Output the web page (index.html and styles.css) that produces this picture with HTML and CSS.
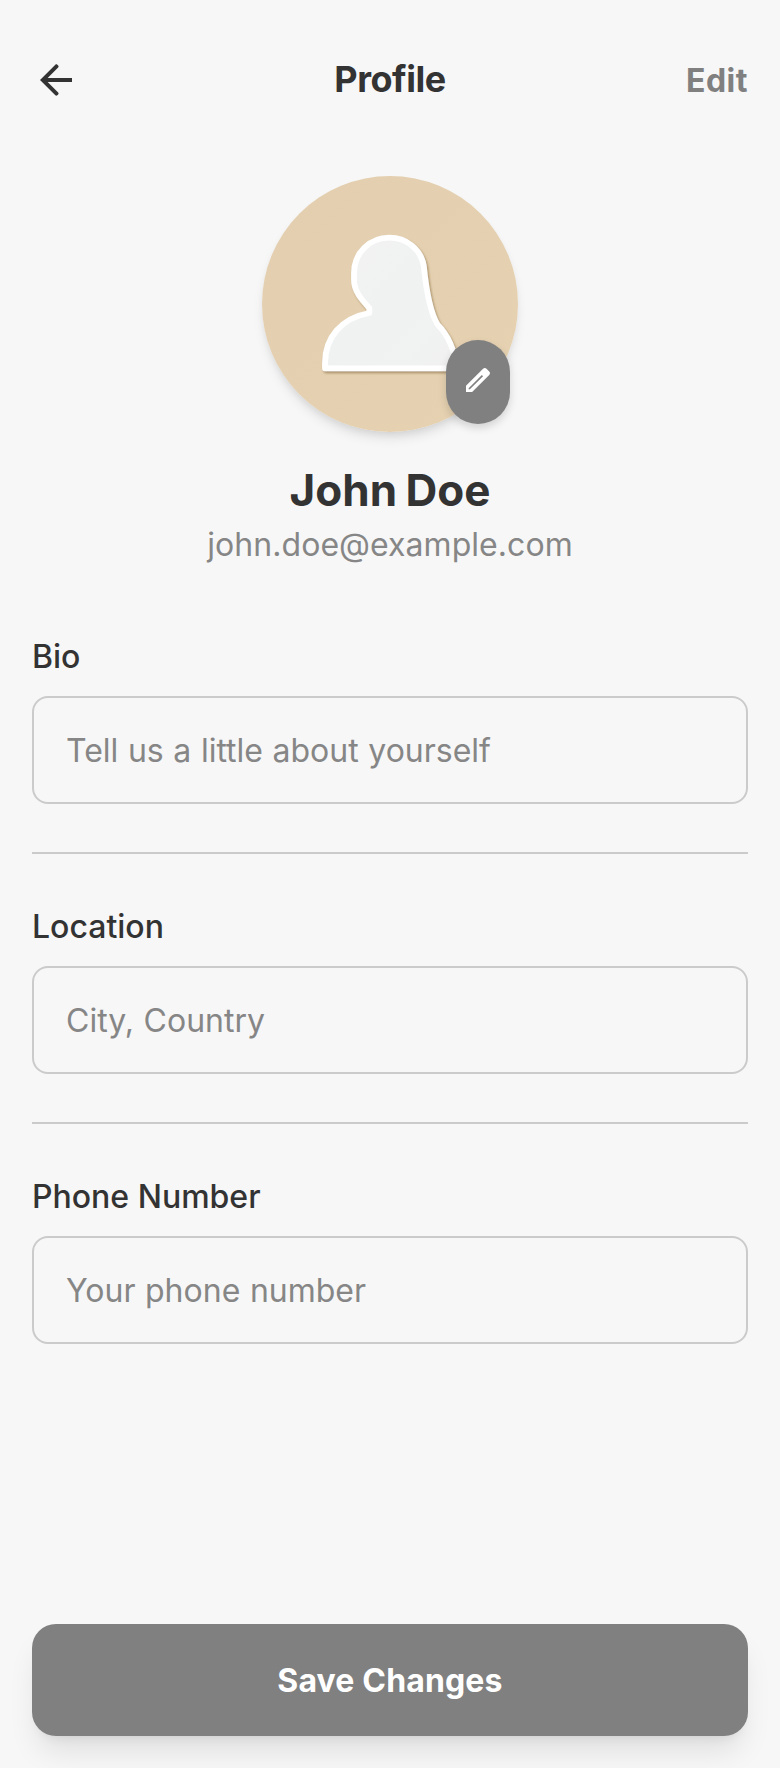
FILE: index.html
```html
<!DOCTYPE html>
<html lang="en">
<head>
<meta charset="utf-8">
<title>Profile</title>
<link rel="stylesheet" href="styles.css">
</head>
<body>
<header class="header">
  <button class="back" aria-label="Back"><svg viewBox="0 0 24 24"><path d="M20 11H7.830l5.240-5.240c.3-.3.3-.7 0-1l-.4-.4c-.3-.3-.7-.3-1 0L4 12l7.670 7.640c.3.3.7.3 1 0l.4-.4c.3-.3.3-.7 0-1L7.830 13H20v-2z"/></svg></button>
  <h1 class="title">Profile</h1>
  <button class="edit">Edit</button>
</header>
<main class="main">
  <section class="profile">
    <div class="avatar">
      <svg class="portrait" viewBox="0 0 256 256">
        <defs>
          <linearGradient id="sand" x1="0" y1="0" x2="1" y2="1"><stop offset="0" stop-color="#e3cfb0"/><stop offset="1" stop-color="#e6d2b1"/></linearGradient>
          <linearGradient id="body" x1="0" y1="0" x2="1" y2="1"><stop offset="0" stop-color="#f2f2f1"/><stop offset=".5" stop-color="#f0f2f2"/><stop offset="1" stop-color="#f1f1f1"/></linearGradient>
          <filter id="soft" x="-20%" y="-20%" width="140%" height="140%"><feDropShadow dx="1.5" dy="2" stdDeviation="1" flood-color="#8c7047" flood-opacity=".65"/></filter>
        </defs>
        <circle cx="128" cy="128" r="128" fill="url(#sand)"/>
        <path filter="url(#soft)" d="M63 192.300V187C63 162 79 142 107.300 137V132C100 124 92 115.500 92 104V97C92 77 107.500 61.700 127.500 61.700C144 61.700 159 73 161.800 90C164 112 168 136 175.500 148.500C184 157 192 170 195 192.300Z" fill="url(#body)" stroke="#fff" stroke-width="5.800" stroke-linejoin="round"/>
      </svg>
      <button class="change" aria-label="Change photo"><svg viewBox="0 0 24 24"><path d="M3 16.400V21h4.600L20.400 8.200c.8-.8.8-1.800 0-2.600l-2-2c-.8-.8-1.800-.8-2.600 0L3 16.400zM5.900 19H5v-.9L14.900 8.200l.9.9L5.900 19z"/></svg></button>
    </div>
    <h2 class="name">John Doe</h2>
    <p class="email">john.doe@example.com</p>
  </section>
  <form class="form">
    <label class="field"><span class="label">Bio</span><input class="input" placeholder="Tell us a little about yourself"></label>
    <hr class="rule">
    <label class="field"><span class="label">Location</span><input class="input" placeholder="City, Country"></label>
    <hr class="rule">
    <label class="field"><span class="label">Phone Number</span><input class="input" placeholder="Your phone number"></label>
  </form>
</main>
<footer class="footer"><button class="save">Save Changes</button></footer>
</body>
</html>
```
FILE: styles.css
```css
* { box-sizing: border-box; }
body {
  margin: 0;
  height: 1768px;
  display: flex;
  flex-direction: column;
  background: #f7f7f7;
  color: #333;
  font-family: Inter, sans-serif;
}
button { border: 0; padding: 0; background: none; font-family: inherit; }
h1, h2, p { margin: 0; }
.header {
  height: 160px;
  padding: 0 32px;
  display: grid;
  grid-template-columns: 1fr auto 1fr;
  align-items: center;
}
.back { width: 48px; height: 48px; }
.back svg { display: block; width: 48px; height: 48px; fill: #333; }
.title { padding-bottom: 2px; font-size: 36px; line-height: 56px; font-weight: 700; letter-spacing: -0.5px; }
.edit { justify-self: end; padding-top: 2px; color: #808080; font-size: 32px; line-height: 48px; font-weight: 700; letter-spacing: 0.5px; }
.main { flex: 1; padding: 16px 32px 0; }
.profile { display: flex; flex-direction: column; align-items: center; }
.avatar { position: relative; width: 256px; height: 256px; border-radius: 50%; box-shadow: 0 8px 12px -2px rgba(0, 0, 0, .1), 0 4px 8px -4px rgba(0, 0, 0, .1); }
.portrait { display: block; width: 256px; height: 256px; }
.change {
  position: absolute;
  right: 8px;
  bottom: 8px;
  width: 64px;
  height: 84px;
  padding-bottom: 4px;
  display: grid;
  place-items: center;
  border-radius: 32px;
  background: #808080;
  box-shadow: 0 4px 8px rgba(0, 0, 0, .15);
}
.change svg { display: block; width: 32px; height: 32px; fill: #fff; }
.name { margin-top: 28px; font-size: 44px; line-height: 60px; font-weight: 700; letter-spacing: 0; word-spacing: -2px; }
.email { padding-top: 1px; color: #868686; font-size: 32px; line-height: 48px; letter-spacing: 0.05px; }
.form { margin-top: 64px; }
.field { display: block; }
.label { display: block; font-size: 32px; line-height: 48px; font-weight: 500; }
.input {
  display: block;
  width: 100%;
  height: 108px;
  margin-top: 15px;
  padding: 0 32px;
  border: 2px solid #cbcbcb;
  border-radius: 16px;
  background: transparent;
  color: #333;
  font: 400 32px/48px Inter, sans-serif;
}
.input::placeholder { color: #868686; opacity: 1; word-spacing: 0.6px; }
.rule { height: 2px; margin: 48px 0 49px; border: 0; background: #cbcbcb; }
.footer { padding: 0 32px 32px; }
.save {
  display: block;
  width: 100%;
  height: 112px;
  padding-top: 2px;
  border-radius: 24px;
  background: #808080;
  color: #fff;
  font-size: 32px;
  line-height: 48px;
  font-weight: 700;
  letter-spacing: 0.15px;
  box-shadow: 0 20px 30px -6px rgba(0, 0, 0, .1), 0 8px 12px -8px rgba(0, 0, 0, .1);
}
```
